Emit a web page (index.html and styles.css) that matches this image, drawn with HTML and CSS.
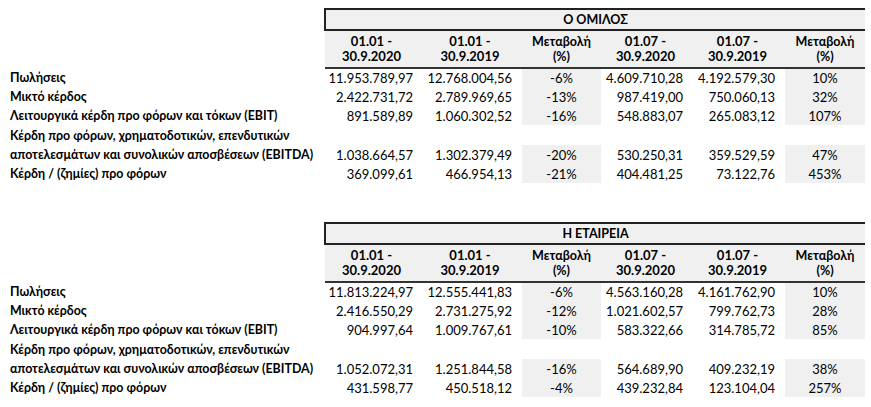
FILE: index.html
```html
<!DOCTYPE html>
<html lang="el">
<head>
  <meta charset="UTF-8">
  <title>Οικονομικά στοιχεία</title>
  <link rel="stylesheet" href="styles.css">
</head>
<body>
<table class="results">
  <colgroup>
    <col class="c-label"><col class="c-a"><col class="c-b"><col class="c-pct"><col class="c-c"><col class="c-d"><col class="c-pct2">
  </colgroup>
  <tr class="title-row">
    <td></td>
    <th colspan="6">Ο ΟΜΙΛΟΣ</th>
  </tr>
  <tr class="head-row">
    <td></td>
    <th>01.01 -<br>30.9.2020</th>
    <th>01.01 -<br>30.9.2019</th>
    <th class="pct-head">Μεταβολή<br>(%)</th>
    <th>01.07 -<br>30.9.2020</th>
    <th>01.07 -<br>30.9.2019</th>
    <th class="pct-head">Μεταβολή<br>(%)</th>
  </tr>
  <tr>
    <td class="label">Πωλήσεις</td>
    <td class="num n1">11.953.789,97</td><td class="num n2">12.768.004,56</td><td class="pct">-6%</td>
    <td class="num n3">4.609.710,28</td><td class="num n4">4.192.579,30</td><td class="pct">10%</td>
  </tr>
  <tr>
    <td class="label">Μικτό κέρδος</td>
    <td class="num n1">2.422.731,72</td><td class="num n2">2.789.969,65</td><td class="pct">-13%</td>
    <td class="num n3">987.419,00</td><td class="num n4">750.060,13</td><td class="pct">32%</td>
  </tr>
  <tr>
    <td class="label">Λειτουργικά κέρδη προ φόρων και τόκων (EBIT)</td>
    <td class="num n1">891.589,89</td><td class="num n2">1.060.302,52</td><td class="pct">-16%</td>
    <td class="num n3">548.883,07</td><td class="num n4">265.083,12</td><td class="pct">107%</td>
  </tr>
  <tr class="wrap-row">
    <td class="label">Κέρδη προ φόρων, χρηματοδοτικών, επενδυτικών</td>
    <td></td><td></td><td></td><td></td><td></td><td></td>
  </tr>
  <tr>
    <td class="label">αποτελεσμάτων και συνολικών αποσβέσεων (EBITDA)</td>
    <td class="num n1">1.038.664,57</td><td class="num n2">1.302.379,49</td><td class="pct">-20%</td>
    <td class="num n3">530.250,31</td><td class="num n4">359.529,59</td><td class="pct">47%</td>
  </tr>
  <tr>
    <td class="label">Κέρδη / (ζημίες) προ φόρων</td>
    <td class="num n1">369.099,61</td><td class="num n2">466.954,13</td><td class="pct">-21%</td>
    <td class="num n3">404.481,25</td><td class="num n4">73.122,76</td><td class="pct">453%</td>
  </tr>
</table>

<table class="results second">
  <colgroup>
    <col class="c-label"><col class="c-a"><col class="c-b"><col class="c-pct"><col class="c-c"><col class="c-d"><col class="c-pct2">
  </colgroup>
  <tr class="title-row">
    <td></td>
    <th colspan="6">Η ΕΤΑΙΡΕΙΑ</th>
  </tr>
  <tr class="head-row">
    <td></td>
    <th>01.01 -<br>30.9.2020</th>
    <th>01.01 -<br>30.9.2019</th>
    <th class="pct-head">Μεταβολή<br>(%)</th>
    <th>01.07 -<br>30.9.2020</th>
    <th>01.07 -<br>30.9.2019</th>
    <th class="pct-head">Μεταβολή<br>(%)</th>
  </tr>
  <tr>
    <td class="label">Πωλήσεις</td>
    <td class="num n1">11.813.224,97</td><td class="num n2">12.555.441,83</td><td class="pct">-6%</td>
    <td class="num n3">4.563.160,28</td><td class="num n4">4.161.762,90</td><td class="pct">10%</td>
  </tr>
  <tr>
    <td class="label">Μικτό κέρδος</td>
    <td class="num n1">2.416.550,29</td><td class="num n2">2.731.275,92</td><td class="pct">-12%</td>
    <td class="num n3">1.021.602,57</td><td class="num n4">799.762,73</td><td class="pct">28%</td>
  </tr>
  <tr>
    <td class="label">Λειτουργικά κέρδη προ φόρων και τόκων (EBIT)</td>
    <td class="num n1">904.997,64</td><td class="num n2">1.009.767,61</td><td class="pct">-10%</td>
    <td class="num n3">583.322,66</td><td class="num n4">314.785,72</td><td class="pct">85%</td>
  </tr>
  <tr class="wrap-row">
    <td class="label">Κέρδη προ φόρων, χρηματοδοτικών, επενδυτικών</td>
    <td></td><td></td><td></td><td></td><td></td><td></td>
  </tr>
  <tr>
    <td class="label">αποτελεσμάτων και συνολικών αποσβέσεων (EBITDA)</td>
    <td class="num n1">1.052.072,31</td><td class="num n2">1.251.844,58</td><td class="pct">-16%</td>
    <td class="num n3">564.689,90</td><td class="num n4">409.232,19</td><td class="pct">38%</td>
  </tr>
  <tr>
    <td class="label">Κέρδη / (ζημίες) προ φόρων</td>
    <td class="num n1">431.598,77</td><td class="num n2">450.518,12</td><td class="pct">-4%</td>
    <td class="num n3">439.232,84</td><td class="num n4">123.104,04</td><td class="pct">257%</td>
  </tr>
</table>
</body>
</html>
```

FILE: styles.css
```css
body{
  margin: 0;
  padding: 0;
  font-family: Lato, "Noto Sans", sans-serif;
  font-size: 13px;
  color: #000;
  background: #fff;
}
*{
  box-sizing: border-box;
}
.results{
  border-collapse: collapse;
  table-layout: fixed;
  width: 865px;
  margin-top: 8px;
}
.results.second{
  margin-top: 39px;
}
.c-label{ width: 325px; }
.c-a{ width: 93px; }
.c-b{ width: 104px; }
.c-pct{ width: 79px; }
.c-c{ width: 89px; }
.c-d{ width: 95px; }
.c-pct2{ width: 80px; }

.results td,
.results th{
  padding: 0;
  height: 19px;
  white-space: nowrap;
}
.title-row th{
  height: 21px;
  background: #f0f0f0;
  border-top: 2px solid #222;
  border-bottom: 2px solid #222;
  border-left: 2px solid #222;
  font-weight: bold;
  font-size: 12.5px;
  text-align: center;
}
.head-row th{
  height: 38px;
  background: #f0f0f0;
  border-bottom: 2px solid #333;
  font-weight: bold;
  text-align: center;
  line-height: 15px;
}
.head-row th.pct-head{
  font-size: 12.5px;
}
.label{
  padding-left: 10px !important;
  font-weight: bold;
  font-size: 12.4px;
}
.num{
  text-align: right;
}
.n1{ padding-right: 5px !important; }
.n2{ padding-right: 10px !important; }
.n3{ padding-right: 7px !important; }
.n4{ padding-right: 10px !important; }
.pct{
  text-align: center;
  background: #f0f0f0;
}
.wrap-row td{
  height: 20px;
}
```
